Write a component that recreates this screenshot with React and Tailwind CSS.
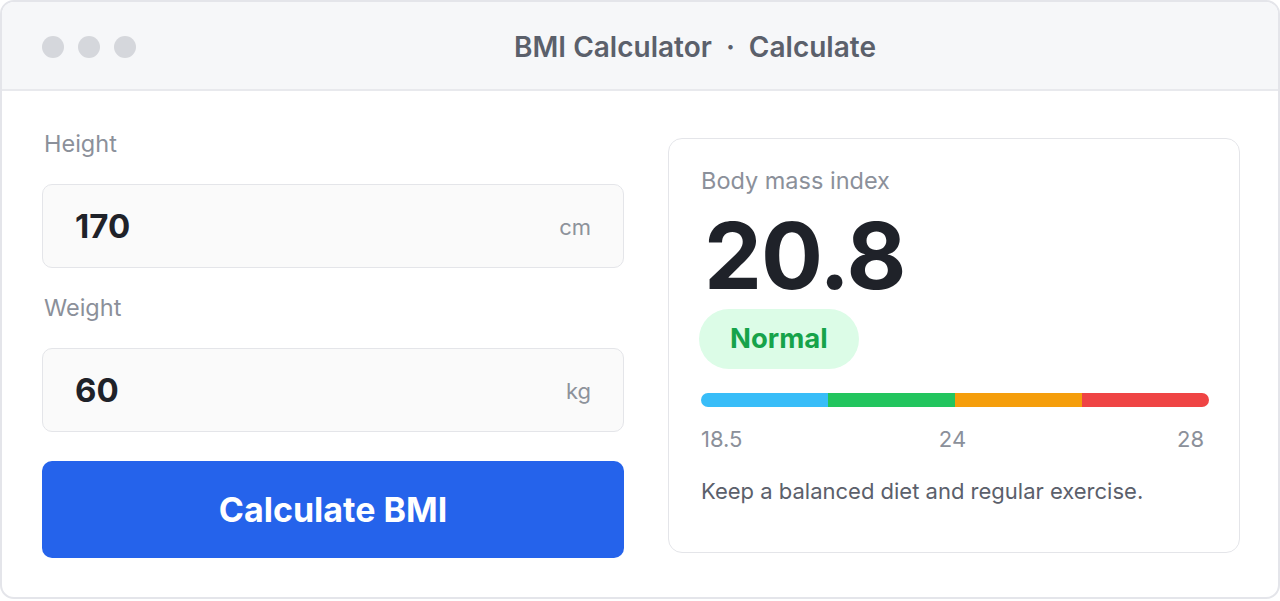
export default function App() {
  const fields = [
    { label: "Height", value: "170", unit: "cm" },
    { label: "Weight", value: "60", unit: "kg" }
  ];
  const segments = ["bg-[#38bdf8]", "bg-[#22c55e]", "bg-[#f59e0b]", "bg-[#ef4444]"];

  return (
    <div className="h-[601px] w-[1280px] bg-white font-['Inter',sans-serif]">
      <div className="flex h-[599px] flex-col overflow-hidden rounded-[14px] border-2 border-[#e4e5ea] bg-white">
        {/* title bar */}
        <div className="flex h-[89px] shrink-0 items-center gap-4 border-b-2 border-[#e8e9ed] bg-[#f6f7f9] px-10 pt-[2px]">
          <div className="flex gap-[14px]">
            <span className="h-[22px] w-[22px] rounded-full bg-[#d5d7dc]" />
            <span className="h-[22px] w-[22px] rounded-full bg-[#d5d7dc]" />
            <span className="h-[22px] w-[22px] rounded-full bg-[#d5d7dc]" />
          </div>
          <div className="flex-1 text-center text-[28px] font-semibold text-[#5b606b]">
            BMI Calculator <span className="mx-[7px]">·</span> Calculate
          </div>
        </div>

        <div className="grid flex-1 grid-cols-[582px_572px] gap-[44px] px-10 pt-[38px]">
          {/* inputs */}
          <div className="flex flex-col">
            {fields.map((field) => (
              <div key={field.label} className="mb-[25px]">
                <div className="mb-[25px] pl-[2px] text-[23.5px] leading-[30px] text-[#8b909a]">{field.label}</div>
                <div className="flex h-[84px] items-center justify-between rounded-[10px] border border-[#e4e5e9] bg-[#fafafa] px-[32px] pt-[2px]">
                  <span className="text-[33px] font-bold text-[#1f2229]">{field.value}</span>
                  <span className="text-[22px] text-[#8d929b]">{field.unit}</span>
                </div>
              </div>
            ))}
            <button
              type="button"
              className="mt-[4px] h-[97px] rounded-[10px] bg-[#2563eb] text-[34px] font-bold text-white"
            >
              Calculate BMI
            </button>
          </div>

          {/* result card */}
          <div className="mt-[9px] flex h-[415px] flex-col rounded-[14px] border border-[#e4e5e9] pl-[32px] pr-[30px] pt-[27px]">
            <div className="text-[23.5px] leading-[30px] text-[#8b909a]">Body mass index</div>
            <div className="ml-[3px] mt-[10px] text-[92px] font-bold leading-[100px] tracking-[-1px] text-[#1f2229]">20.8</div>
            <div className="-ml-[2px] mt-[3px]">
              <span className="inline-flex h-[60px] items-center rounded-full bg-[#dcfce7] px-[31px] text-[27.5px] font-bold text-[#16a34a]">
                Normal
              </span>
            </div>
            <div className="mt-[24px] flex h-[14px] overflow-hidden rounded-full">
              {segments.map((segment) => (
                <div key={segment} className={`flex-1 ${segment}`} />
              ))}
            </div>
            <div className="mt-[17px] grid grid-cols-3 pr-[5px] text-[22px] leading-[30px] text-[#8b909a]">
              <span>18.5</span>
              <span className="text-center">24</span>
              <span className="text-right">28</span>
            </div>
            <div className="mt-[22px] text-[22px] leading-[30px] text-[#5b606b]">Keep a balanced diet and regular exercise.</div>
          </div>
        </div>
      </div>
    </div>
  );
}
